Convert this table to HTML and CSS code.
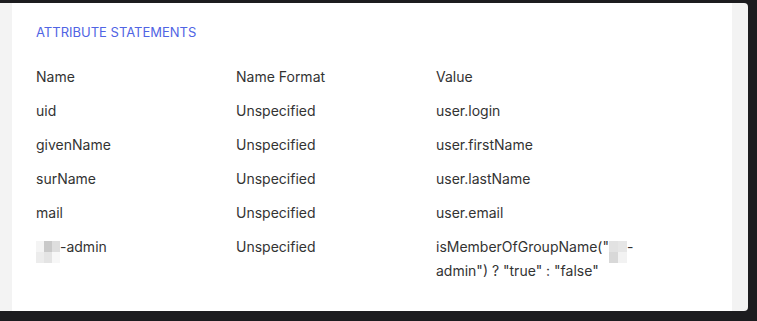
FILE: index.html
```html
<!DOCTYPE html>
<html>
<head>
    <title>Attribute Statements</title>
    <meta charset="utf-8">
    <link rel="stylesheet" href="styles.css">
</head>
<body>
    <div class="frame">
        <div class="panel">
            <div class="card">
                <h2 class="section-title">Attribute Statements</h2>
                <table class="attrs">
                    <thead>
                        <tr>
                            <th>Name</th>
                            <th>Name Format</th>
                            <th>Value</th>
                        </tr>
                    </thead>
                    <tbody>
                        <tr><td>uid</td><td>Unspecified</td><td>user.login</td></tr>
                        <tr><td>givenName</td><td>Unspecified</td><td>user.firstName</td></tr>
                        <tr><td>surName</td><td>Unspecified</td><td>user.lastName</td></tr>
                        <tr><td>mail</td><td>Unspecified</td><td>user.email</td></tr>
                        <tr>
                            <td><span class="redact redact-wide"><i></i><i></i><i></i><i></i><i></i><i></i></span>-admin</td>
                            <td>Unspecified</td>
                            <td>isMemberOfGroupName("<span class="redact redact-narrow"><i></i><i></i><i></i><i></i></span>-admin") ? "true" : "false"</td>
                        </tr>
                    </tbody>
                </table>
            </div>
        </div>
    </div>
</body>
</html>
```

FILE: styles.css
```css
html, body {
    margin: 0;
    padding: 0;
    height: 100%;
    overflow: hidden;
    background: #1c1c1f;
}

.frame {
    padding: 3px 9px 0 0;
    height: 308px;
}

.panel {
    height: 100%;
    background: #f3f3f3;
    border-radius: 0 4px 4px 0;
    padding: 0 16px 0 12px;
    box-sizing: border-box;
}

.card {
    height: 100%;
    background: #fff;
    padding: 21px 24px 0;
    box-sizing: border-box;
    font-family: Inter, 'Noto Sans', sans-serif;
    color: #333;
}

.section-title {
    margin: 0;
    font-size: 13px;
    line-height: 16px;
    font-weight: 400;
    text-transform: uppercase;
    color: #5064e4;
}

.attrs {
    margin-top: 20px;
    border-collapse: collapse;
    table-layout: fixed;
    width: 600px;
    font-size: 14px;
    line-height: 24px;
}

.attrs th,
.attrs td {
    width: 200px;
    padding: 5px 0;
    text-align: left;
    font-weight: 400;
    vertical-align: top;
}

/* pixelated blur over private group names */
.redact {
    display: inline-grid;
    vertical-align: middle;
    height: 22px;
    margin: -4px 0 -6px;
    position: relative;
    top: 3px;
}

.redact-wide {
    grid-template-columns: 8px 8px 8px;
    grid-template-rows: 11px 11px;
    width: 24px;
}

.redact-narrow {
    grid-template-columns: 9px 9px;
    grid-template-rows: 11px 11px;
    width: 18px;
}

.redact-wide i:nth-child(1) { background: #f4f4f4; }
.redact-wide i:nth-child(2) { background: #c9c9c9; }
.redact-wide i:nth-child(3) { background: #dedede; }
.redact-wide i:nth-child(4) { background: #ececec; }
.redact-wide i:nth-child(5) { background: #e4e4e4; }
.redact-wide i:nth-child(6) { background: #f7f7f7; }

.redact-narrow i:nth-child(1) { background: #e2e2e2; }
.redact-narrow i:nth-child(2) { background: #e6e6e6; }
.redact-narrow i:nth-child(3) { background: #d8d8d8; }
.redact-narrow i:nth-child(4) { background: #f2f2f2; }
```
